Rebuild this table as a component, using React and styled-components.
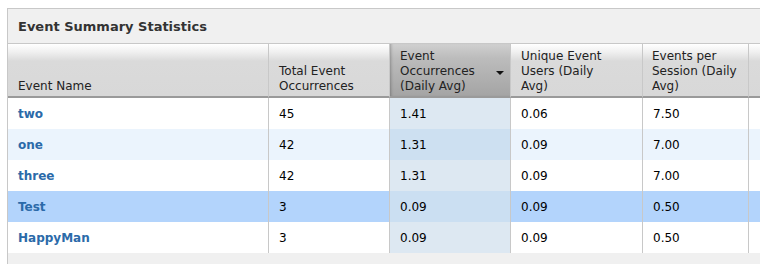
import React from "react";
import styled, { createGlobalStyle } from "styled-components";

const Global = createGlobalStyle`
  html, body { margin: 0; padding: 0; background: #ffffff; overflow: hidden; }
  body { font-family: "DejaVu Sans", Verdana, sans-serif; }
`;

const Page = styled.div`
  padding: 8px 0 0 7px;
  width: 1000px;
`;

const Panel = styled.section`
  border-left: 1px solid #c8c8c8;
  border-top: 1px solid #c8c8c8;
  background: #f0f0f0;
  padding-bottom: 20px;
`;

const TitleBar = styled.h2`
  margin: 0;
  height: 35px;
  box-sizing: border-box;
  padding: 1px 10px 0 10px;
  display: flex;
  align-items: center;
  font-size: 13px;
  font-weight: bold;
  color: #333333;
  background: #f0f0f0;
  border-bottom: 1px solid #c8c8c8;
`;

const Table = styled.table`
  border-collapse: separate;
  border-spacing: 0;
  table-layout: fixed;
  width: 900px;
  font-size: 12px;
`;

const Th = styled.th`
  box-sizing: border-box;
  width: ${(p) => p.$w}px;
  height: 54px;
  padding: 0 6px 2px ${(p) => p.$pl}px;
  text-align: left;
  vertical-align: bottom;
  font-weight: normal;
  line-height: 15px;
  color: #222222;
  white-space: normal;
  border-right: 1px solid #c8c8c8;
  border-bottom: 2px solid #9a9a9a;
  background: ${(p) =>
    p.$sorted
      ? "linear-gradient(#d0d0d0 0px, #bcbcbc 14px, #acacac 40px, #a4a4a4 100%)"
      : "linear-gradient(#ffffff 0px, #f0f0f0 8px, #dadada 17px, #d8d8d8 100%)"};
  box-shadow: ${(p) => (p.$sorted ? "inset 3px 0 3px -2px rgba(0,0,0,0.25)" : "none")};
  position: relative;
  overflow: hidden;
`;

const SortArrow = styled.span`
  position: absolute;
  right: 6px;
  top: 27px;
  width: 0;
  height: 0;
  border-left: 4px solid transparent;
  border-right: 4px solid transparent;
  border-top: 4px solid #111111;
`;

const HeaderText = styled.span`
  display: block;
  width: ${(p) => p.$tw}px;
`;

const Tr = styled.tr`
  background: ${(p) => (p.$selected ? "#b3d4fc" : p.$alt ? "#ebf4fd" : "#ffffff")};
`;

const Td = styled.td`
  height: 31px;
  box-sizing: border-box;
  padding: 0 10px 0 ${(p) => p.$pl}px;
  border-right: 1px solid #c8c8c8;
  color: #000000;
  white-space: nowrap;
  overflow: hidden;
  background: ${(p) =>
    p.$sorted ? (p.$selected ? "#cbdff2" : p.$alt ? "#cde0f1" : "#dde8f2") : "transparent"};
`;

const NameLink = styled.a`
  color: #2b6aa9;
  font-weight: bold;
  text-decoration: none;
`;

const columns = [
  { label: "Event Name", w: 261, tw: 200, pl: 10 },
  { label: "Total Event Occurrences", w: 121, tw: 90, pl: 10 },
  { label: "Event Occurrences (Daily Avg)", w: 121, tw: 90, pl: 10, sorted: true },
  { label: "Unique Event Users (Daily Avg)", w: 132, tw: 92, pl: 10 },
  { label: "Events per Session (Daily Avg)", w: 106, tw: 90, pl: 9 },
  { label: "Users per Session (Daily Avg)", w: 159, tw: 120, pl: 11, bodyPl: 14 },
];

const rows = [
  ["two", "45", "1.41", "0.06", "7.50", "0.19"],
  ["one", "42", "1.31", "0.09", "7.00", "0.19"],
  ["three", "42", "1.31", "0.09", "7.00", "0.19"],
  ["Test", "3", "0.09", "0.09", "0.50", "0.19"],
  ["HappyMan", "3", "0.09", "0.09", "0.50", "0.19"],
];

export default function App() {
  return (
    <>
      <Global />
      <Page>
        <Panel>
          <TitleBar>Event Summary Statistics</TitleBar>
          <Table>
            <thead>
              <tr>
                {columns.map((c, i) => (
                  <Th key={i} $w={c.w} $pl={c.pl} $sorted={c.sorted}>
                    <HeaderText $tw={c.tw}>{c.label}</HeaderText>
                    {c.sorted && <SortArrow />}
                  </Th>
                ))}
              </tr>
            </thead>
            <tbody>
              {rows.map((r, ri) => {
                const selected = ri === 3;
                const alt = ri === 1;
                return (
                  <Tr key={ri} $selected={selected} $alt={alt}>
                    {r.map((v, ci) => (
                      <Td
                        key={ci}
                        $pl={columns[ci].bodyPl || 10}
                        $sorted={ci === 2}
                        $selected={selected}
                        $alt={alt}
                      >
                        {ci === 0 ? <NameLink href="#">{v}</NameLink> : v}
                      </Td>
                    ))}
                  </Tr>
                );
              })}
            </tbody>
          </Table>
        </Panel>
      </Page>
    </>
  );
}
